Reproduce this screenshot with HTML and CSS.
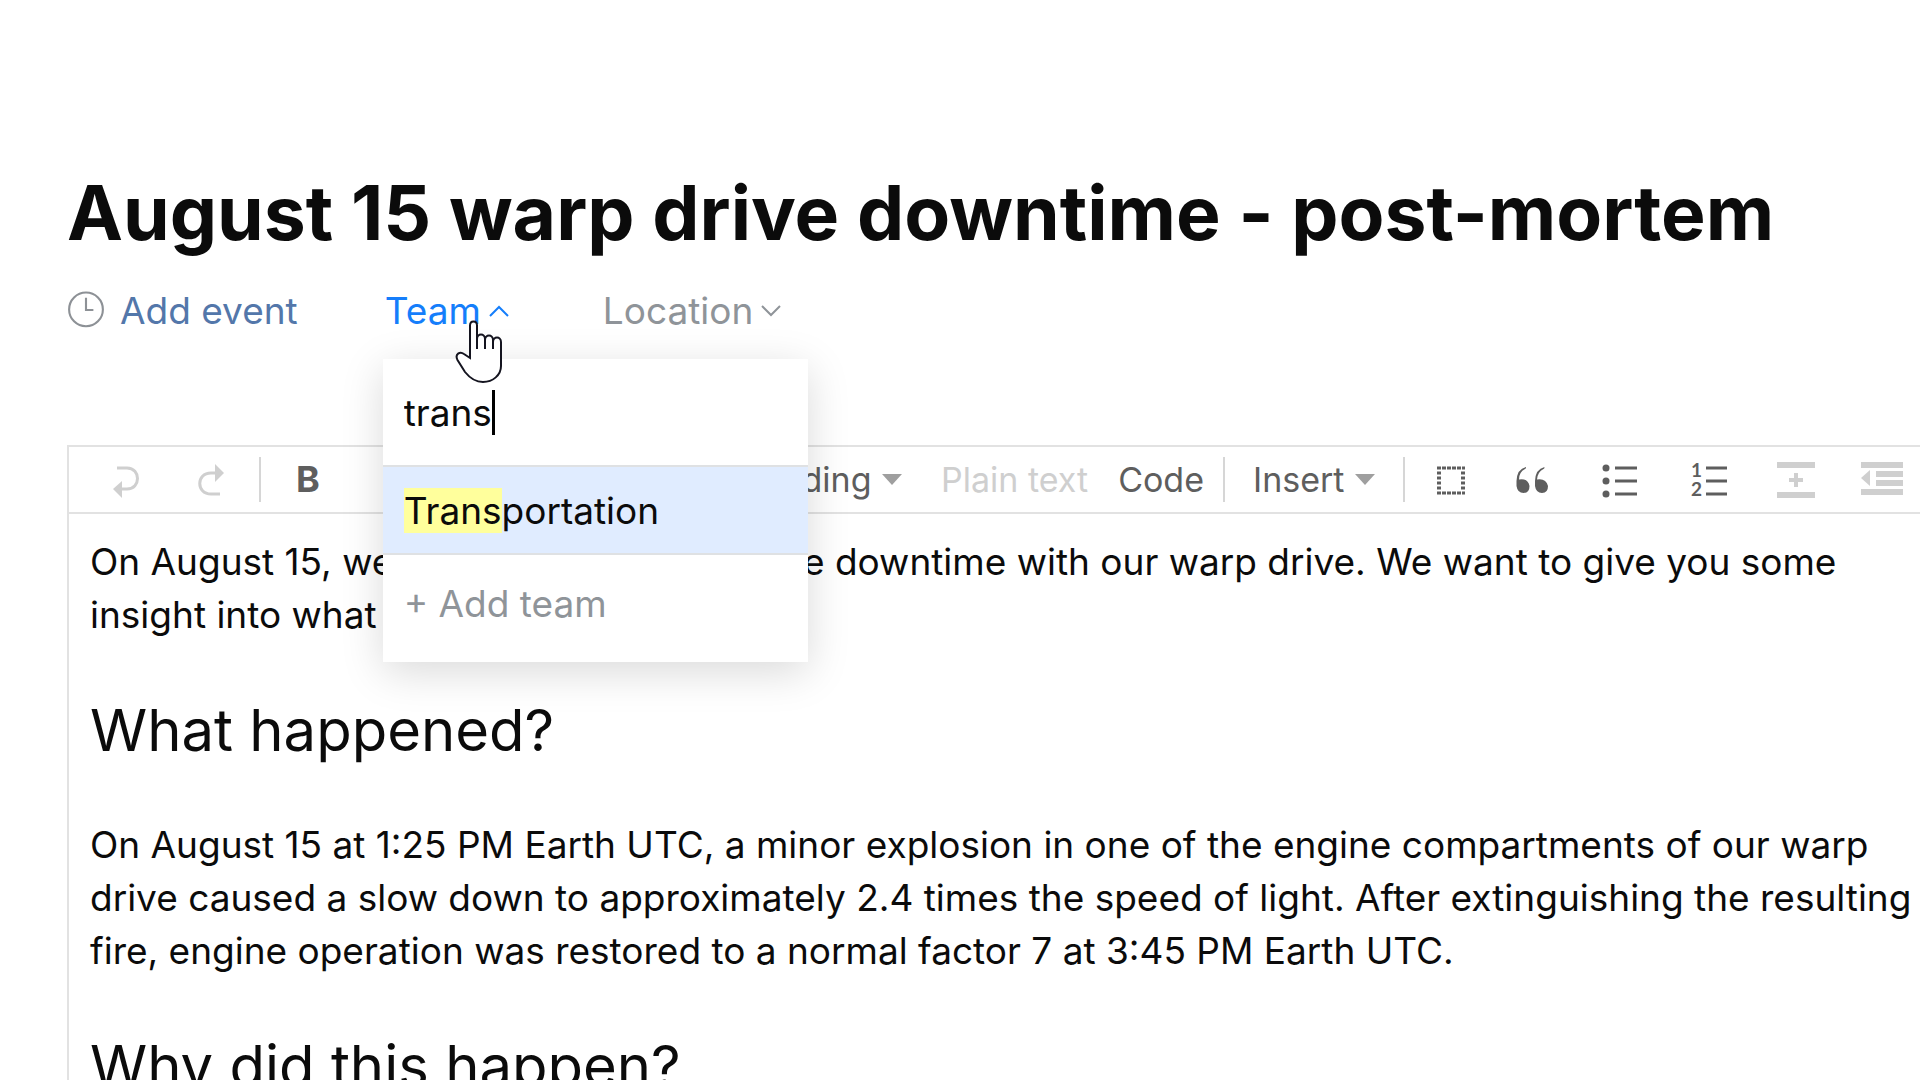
FILE: index.html
```html
<!DOCTYPE html>
<html lang="en">
<head>
<meta charset="utf-8">
<title>August 15 warp drive downtime - post-mortem</title>
<link rel="stylesheet" href="styles.css">
</head>
<body>
<main class="page">
  <h1 class="title">August 15 warp drive downtime - post-mortem</h1>

  <div class="meta">
    <button class="meta-item add-event" type="button">
      <svg class="clock" viewBox="0 0 36 36" aria-hidden="true"><circle cx="18" cy="16.500" r="16"/><path d="M18 5.500v11.500h7"/></svg>
      Add event
    </button>

    <div class="field">
      <button class="meta-item team" type="button" aria-haspopup="listbox" aria-expanded="true">
        Team
        <svg class="chevron" viewBox="0 0 20 12" aria-hidden="true"><path d="M1 11l9-9 9 9"/></svg>
      </button>
      <div class="dropdown">
        <label class="search">
          <input class="search-input" type="text" value="trans" aria-label="Team"><span class="caret"></span>
        </label>
        <button class="option" type="button"><span><mark>Trans</mark>portation</span></button>
        <button class="add" type="button">+ Add team</button>
      </div>
      <svg class="pointer" viewBox="0 0 48 64" aria-hidden="true">
        <path d="M15 38V5.500C15 0 22 0 22 5.500V29V19C22 13 30 13 30 19V29V20C30 14 38 14 38 20V29V22C38 16 46 16 46 22V46C46 55 38 62 28 62C19 62 14 57 10 52L2.500 40C-.500 34 5 31 9 34Z"/>
      </svg>
    </div>

    <button class="meta-item location" type="button" aria-haspopup="listbox">
      Location
      <svg class="chevron" viewBox="0 0 20 12" aria-hidden="true"><path d="M1 1l9 9 9-9"/></svg>
    </button>
  </div>

  <section class="editor">
    <div class="toolbar" role="toolbar">
      <button class="tool off" type="button" aria-label="Undo"><svg viewBox="0 0 44 44"><path class="line" d="M13 10H23C37 10 37 31 23 31H16"/><path d="M9 31l9-8v17z"/></svg></button>
      <button class="tool off" type="button" aria-label="Redo"><svg viewBox="0 0 44 44"><path class="line" d="M30 36H21C6 36 6 15 21 15H27"/><path d="M34 15l-9-9v18z"/></svg></button>
      <span class="sep"></span>
      <div class="marks">
        <button class="tool bold" type="button">B</button>
        <button class="tool" type="button" aria-label="Italic"><svg viewBox="0 0 44 44"><path class="line" d="M18 10h10M14 34h10M23 10l-4 24"/></svg></button>
        <button class="tool" type="button" aria-label="Underline"><svg viewBox="0 0 44 44"><path class="line" d="M14 8v14q0 8 8 8t8-8V8M12 36h20"/></svg></button>
        <button class="tool" type="button" aria-label="Strikethrough"><svg viewBox="0 0 44 44"><path class="line" d="M8 22h28M29 12q-7-5-13 0t6 10 7 10-14 0"/></svg></button>
        <button class="tool" type="button" aria-label="Link"><svg viewBox="0 0 44 44"><path class="line" d="M20 14h-6a8 8 0 0 0 0 16h6M24 14h6a8 8 0 0 1 0 16h-6M15 22h14"/></svg></button>
      </div>
      <span class="sep"></span>
      <span class="menu"><select class="menu-select" aria-label="Heading"><option>Heading</option></select></span>
      <button class="text-tool off" type="button">Plain text</button>
      <button class="text-tool" type="button">Code</button>
      <span class="sep"></span>
      <span class="menu"><select class="menu-select" aria-label="Insert"><option>Insert</option></select></span>
      <span class="sep"></span>
      <button class="tool" type="button" aria-label="Panel"><svg viewBox="0 0 44 44"><path class="dots" d="M7 10h28M7 35h28"/><path class="dots-side" d="M9 13.500v20M33 13.500v20"/></svg></button>
      <button class="tool" type="button" aria-label="Quote"><svg viewBox="5 0 44 44"><path d="M15 9q0 2-1 2Q8 14 8 21.500q9-1.500 10.500 6.500Q18.500 35 12.500 35T5.500 28V23Q6 11 15 9zM33.500 9q0 2-1 2Q26.500 14 26 21.500q9-1.500 11 6.500Q37 35 31 35T24 28V23Q24.500 11 33.500 9z"/></svg></button>
      <button class="tool" type="button" aria-label="Bulleted list"><svg viewBox="4 0 44 44"><circle cx="8" cy="10" r="3.500"/><circle cx="8" cy="23" r="3.500"/><circle cx="8" cy="36" r="3.500"/><path class="line" d="M17 10h22M17 23h22M17 36h22"/></svg></button>
      <button class="tool" type="button" aria-label="Numbered list"><svg viewBox="0 0 44 44"><text class="digit" x="3" y="19">1</text><text class="digit" x="3" y="38">2</text><path class="line" d="M18 10h21M18 23h21M18 36h21"/></svg></button>
      <button class="tool off" type="button" aria-label="Insert rule"><svg viewBox="0 0 44 44"><path d="M3 4h38v6H3zM3 34h38v6H3zM20 15h4v5h5v4h-5v5h-4v-5h-5v-4h5z"/></svg></button>
      <button class="tool off" type="button" aria-label="Outdent"><svg viewBox="0 0 44 44"><path d="M1 4h42v6H1zM16 13h27v6H16zM16 22h27v6H16zM1 31h42v6H1zM1 20l9-8v16z"/></svg></button>
    </div>
    <div class="content">
      <p>On August 15, we experienced quite some downtime with our warp drive. We want to give you some insight into what happened.</p>
      <h2>What happened?</h2>
      <p>On August 15 at 1:25 PM Earth UTC, a minor explosion in one of the engine compartments of our warp drive caused a slow down to approximately 2.4 times the speed of light. After extinguishing the resulting fire, engine operation was restored to a normal factor 7 at 3:45 PM Earth UTC.</p>
      <h2>Why did this happen?</h2>
    </div>
  </section>
</main>
</body>
</html>
```
FILE: styles.css
```css
* {
  box-sizing: border-box;
}

html {
  height: 100%;
  overflow: hidden;
}

body {
  margin: 0;
  min-height: 100%;
  background: #fff;
  color: #0b0b0b;
  font-family: Inter, "Liberation Sans", sans-serif;
  font-size: 37px;
  line-height: 53px;
}

button,
input,
select {
  margin: 0;
  padding: 0;
  border: 0;
  background: none;
  color: inherit;
  font: inherit;
  outline: none;
}

.page {
  margin-right: -40px;
  padding: 167px 0 0 67px;
}

.title {
  margin: 0;
  font-size: 75px;
  font-weight: 700;
  line-height: 92px;
}

.meta {
  display: flex;
  align-items: center;
  gap: 87px;
  margin-top: 25px;
}

.meta-item {
  display: flex;
  align-items: center;
  gap: 8px;
}

.add-event {
  gap: 15px;
  color: #5377aa;
}

.clock {
  width: 38px;
  height: 38px;
  overflow: visible;
  fill: none;
  stroke: #8d9196;
  stroke-width: 2;
}

.field {
  position: relative;
}

.team {
  color: #157efb;
}

.location {
  margin-left: 7px;
  color: #8f9499;
}

.chevron {
  width: 20px;
  height: 12px;
  fill: none;
  stroke: currentColor;
  stroke-width: 2;
}

.dropdown {
  position: absolute;
  z-index: 1;
  top: 75px;
  left: -2px;
  width: 425px;
  background: #fff;
  box-shadow: 0 10px 40px rgba(0, 0, 0, 0.15);
}

.search,
.option,
.add {
  display: flex;
  align-items: center;
  width: 100%;
  padding: 0 21px;
}

.search {
  height: 106px;
}

.search-input {
  field-sizing: content;
  height: 53px;
  caret-color: transparent;
}

.caret {
  width: 3px;
  height: 45px;
  background: #000;
}

.option {
  height: 90px;
  border-top: 2px solid #dfe1e3;
  border-bottom: 2px solid #dfe1e3;
  background: #e0ecff;
}

.option mark {
  background: #ffff9c;
  color: inherit;
}

.add {
  height: 107px;
  padding-bottom: 10px;
  color: #8f9499;
}

.pointer {
  position: absolute;
  z-index: 2;
  top: 36px;
  left: 70px;
  width: 48px;
  height: 64px;
  fill: #fff;
  stroke: #14141f;
  stroke-width: 2;
}

.editor {
  margin-top: 108px;
  border: 2px solid #e2e2e2;
}

.toolbar {
  display: flex;
  align-items: center;
  height: 67px;
  padding-left: 14px;
  border-bottom: 2px solid #e2e2e2;
  color: #5e5e5e;
  font-size: 34px;
}

.toolbar > * {
  flex: none;
}

.marks {
  display: flex;
  gap: 2px;
}

.tool {
  display: grid;
  place-items: center;
  width: 86px;
}

.tool svg {
  width: 44px;
  height: 44px;
  fill: currentColor;
}

.tool .line,
.tool .dots,
.tool .dots-side {
  fill: none;
  stroke: currentColor;
  stroke-width: 3;
}

.tool .dots {
  stroke-dasharray: 4 1;
}

.tool .dots-side {
  stroke-width: 4;
  stroke-dasharray: 3 2;
}

.digit {
  font-family: Lato, sans-serif;
  font-size: 19px;
  font-weight: 700;
}

.off {
  color: #cfcfcf;
}

.bold {
  font-size: 36px;
  font-weight: 700;
}

.sep {
  width: 2px;
  height: 45px;
  margin: 0 4px;
  background: #d6d6d6;
}

.text-tool {
  padding: 0 15px;
}

.menu {
  display: flex;
  align-items: center;
  gap: 10px;
  padding: 0 24px;
}

.menu::after {
  content: "";
  border: 10px solid transparent;
  border-top: 11px solid #9f9f9f;
  border-bottom: 0;
}

.menu-select {
  appearance: none;
}

.content {
  padding: 21px;
  min-height: 600px;
}

.content p {
  margin: 0;
}

.content h2 {
  margin: 53px 0 52px;
  font-size: 58px;
  font-weight: 400;
  line-height: 72px;
}
```
